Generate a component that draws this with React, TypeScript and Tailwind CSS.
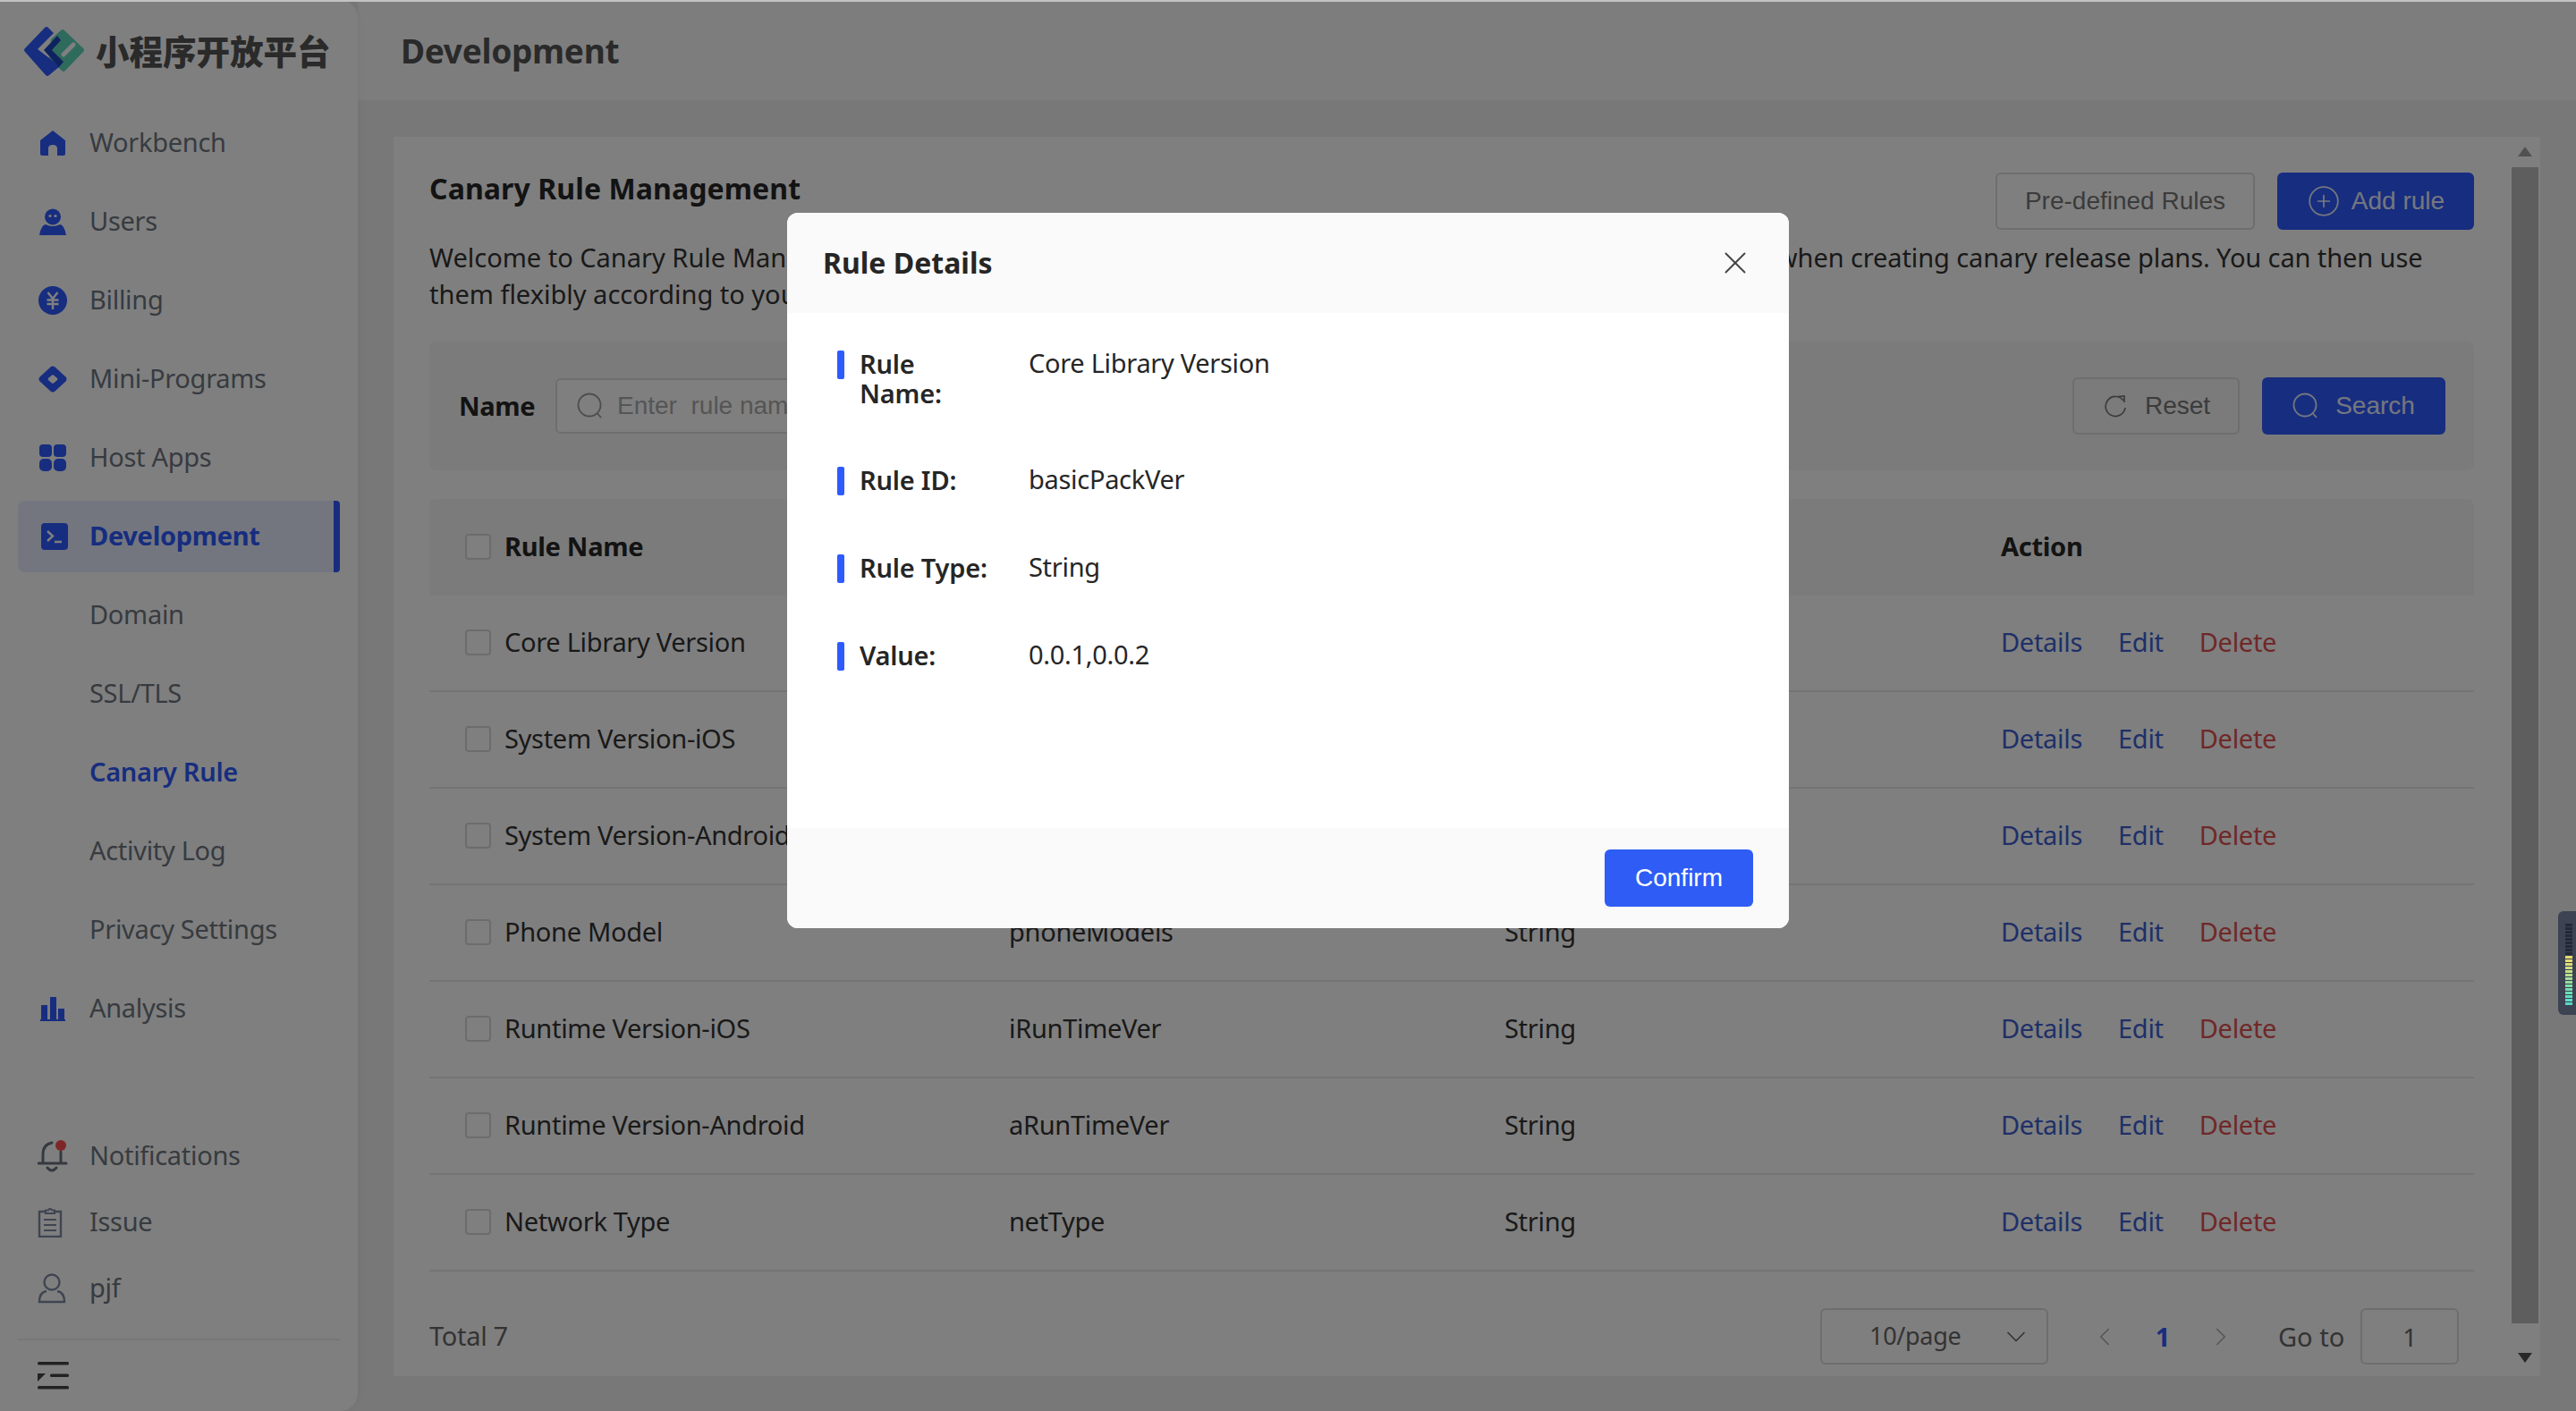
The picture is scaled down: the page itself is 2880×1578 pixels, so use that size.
import React from "react";
import { X, ChevronDown, ChevronLeft, ChevronRight, CirclePlus } from "lucide-react";

const B = "#2e5bff";

function Logo() {
  return (
    <svg width="68" height="56" viewBox="0 0 68 56" className="shrink-0">
      <path d="M41 4 Q43 2 45 4 L66 24 Q68 26 66 28 L46 49 Q44 51 42 49 L28 36 L30 14 Z" fill="#5fd6b8" />
      <path d="M44 31 L55 20" stroke="#fff" strokeWidth="5" strokeLinecap="round" />
      <path d="M23 1 Q25 -1 27 1 L33 7 L15 25 L40 44 L28 54 Q26 56 24 54 L1 28 Q-1 26 1 24 Z" fill="#2e5bff" />
      <path d="M37 10 L41 15 L31 26 L44 39 L39 45 L22 26 Z" fill="#1e44c0" />
    </svg>
  );
}

const ic = "shrink-0";
const Home = () => (
  <svg width="30" height="30" viewBox="0 0 30 30" className={ic}><path d="M15 1 L29 12 V27 Q29 29 27 29 H20 V21 Q20 17 15 17 Q10 17 10 21 V29 H3 Q1 29 1 27 V12 Z" fill={B} /></svg>
);
const Users = () => (
  <svg width="30" height="30" viewBox="0 0 30 30" className={ic}>
    <ellipse cx="15" cy="9.5" rx="9" ry="9" fill={B} />
    <circle cx="12" cy="8.5" r="1.6" fill="#fff" /><circle cx="18" cy="8.5" r="1.6" fill="#fff" />
    <path d="M7 18 Q15 22 23 18 Q28 19 30 30 H0 Q2 19 7 18 Z" fill={B} />
  </svg>
);
const Billing = () => (
  <svg width="32" height="32" viewBox="0 0 32 32" className={ic}>
    <circle cx="16" cy="16" r="16" fill={B} />
    <path d="M10.5 7 L16 14 L21.5 7 M9.5 15.5 H22.5 M9.5 20 H22.5 M16 14 V26" stroke="#fff" strokeWidth="2.4" fill="none" />
  </svg>
);
const Diamond = () => (
  <svg width="32" height="30" viewBox="0 0 32 30" className={ic}>
    <path d="M13.5 1.5 Q16 -0.5 18.5 1.5 L30.5 12.5 Q32.5 15 30.5 17.5 L18.5 28.5 Q16 30.5 13.5 28.5 L1.5 17.5 Q-0.5 15 1.5 12.5 Z" fill={B} />
    <path d="M15 10.5 Q16 10 17 10.5 L21 14 Q22 15 21 16 L17 19.5 Q16 20 15 19.5 L11 16 Q10 15 11 14 Z" fill="#fff" />
  </svg>
);
const Grid4 = () => (
  <svg width="30" height="30" viewBox="0 0 30 30" className={ic}>
    <rect x="0" y="0" width="14" height="14" rx="4" fill={B} /><rect x="16" y="0" width="14" height="14" rx="4" fill={B} />
    <rect x="0" y="16" width="14" height="14" rx="5" fill={B} /><rect x="16" y="16" width="14" height="14" rx="5" fill={B} />
  </svg>
);
const Term = () => (
  <svg width="30" height="30" viewBox="0 0 30 30" className={ic}>
    <rect width="30" height="30" rx="4" fill={B} />
    <path d="M7 9 L13 14.5 L7 20 M15 21 H23" stroke="#fff" strokeWidth="2.4" fill="none" />
  </svg>
);
const Bars = () => (
  <svg width="28" height="27" viewBox="0 0 28 27" className={ic}>
    <rect x="1" y="9" width="7" height="16" fill={B} /><rect x="11" y="0" width="7" height="25" fill={B} /><rect x="20" y="13" width="7" height="12" fill={B} /><rect x="0" y="25" width="28" height="2" fill={B} />
  </svg>
);
const Bell = () => (
  <svg width="34" height="38" viewBox="0 0 34 38" className={ic}>
    <path d="M6 26 V17 Q6 6 16 4 M26 14 V26 M1 27 H32 M11 32 Q16 38 21 32" stroke="#6b7280" strokeWidth="3" fill="none" strokeLinecap="round" />
    <circle cx="26" cy="7" r="6" fill="#ff4d4f" />
  </svg>
);
const Clip = () => (
  <svg width="28" height="34" viewBox="0 0 28 34" className={ic}>
    <path d="M9 5 H2 V33 H26 V5 H19" stroke="#7f8aa3" strokeWidth="2.4" fill="none" />
    <path d="M9 7 V3.5 H12 Q14 0 16 3.5 H19 V7 Z" stroke="#7f8aa3" strokeWidth="2.2" fill="none" />
    <path d="M7 14 H21 M7 20 H21 M7 26 H21" stroke="#7f8aa3" strokeWidth="2.2" />
  </svg>
);
const Person = () => (
  <svg width="32" height="34" viewBox="0 0 32 34" className={ic}>
    <circle cx="16" cy="10" r="8.5" stroke="#7f8aa3" strokeWidth="2.4" fill="none" />
    <path d="M10 20 Q2 21 2 32 H30 Q30 21 22 20" stroke="#7f8aa3" strokeWidth="2.4" fill="none" />
  </svg>
);
const Toggle = () => (
  <svg width="36" height="31" viewBox="0 0 36 31" className="shrink-0">
    <rect x="0" y="0" width="35" height="3.6" rx="1.5" fill="#444" />
    <rect x="14" y="13.5" width="21" height="3.6" rx="1.5" fill="#444" />
    <rect x="0" y="27" width="35" height="3.6" rx="1.5" fill="#444" />
    <path d="M0 13 H9 L0 22 Z" fill="#444" />
  </svg>
);
const Find = ({ cls }: { cls: string }) => (
  <svg width="30" height="30" viewBox="0 0 30 30" className={`shrink-0 ${cls}`}>
    <circle cx="14" cy="14" r="12.5" fill="none" stroke="currentColor" strokeWidth="1.8" />
    <path d="M23 23.5 L27 28" fill="none" stroke="currentColor" strokeWidth="1.8" />
  </svg>
);
const Refresh = () => (
  <svg width="24" height="25" viewBox="0 0 24 25" className="shrink-0">
    <path d="M21 6 A11 11 0 1 0 23 14" fill="none" stroke="currentColor" strokeWidth="1.7" />
    <path d="M15 1.5 L22 1 L22 8" fill="none" stroke="currentColor" strokeWidth="1.7" />
  </svg>
);

function Nav({ icon, label, cls = "text-[#6f7680]" }: { icon?: React.ReactNode; label: string; cls?: string }) {
  return (
    <div className="h-[88px] flex items-center pl-[44px]">
      <div className="w-[56px] flex justify-center shrink-0 pr-[26px]">{icon}</div>
      <span className={`text-[29px] tracking-[-0.3px] leading-none pb-[3px] ${cls}`}>{label}</span>
    </div>
  );
}

function Foot({ icon, label, h }: { icon: React.ReactNode; label: string; h: string }) {
  return (
    <div className={`flex items-center ${h} pl-[42px]`}>
      <div className="w-[58px] shrink-0">{icon}</div>
      <span className="text-[29px] tracking-[-0.3px] leading-none pb-[3px] text-[#6f7680]">{label}</span>
    </div>
  );
}

const rows = [
  ["Core Library Version", "basicPackVer", "String"],
  ["System Version-iOS", "iOSVer", "String"],
  ["System Version-Android", "androidVer", "String"],
  ["Phone Model", "phoneModels", "String"],
  ["Runtime Version-iOS", "iRunTimeVer", "String"],
  ["Runtime Version-Android", "aRunTimeVer", "String"],
  ["Network Type", "netType", "String"],
];

const cols = "grid grid-cols-[648px_554px_555px_1fr] items-center";

function Check() {
  return <span className="w-[29px] h-[29px] rounded-[4px] border-2 border-[#d9d9d9] bg-white shrink-0 mr-[15px]" />;
}

function Detail({ label, value, tall }: { label: React.ReactNode; value: string; tall?: boolean }) {
  return (
    <div className="flex items-start mb-[64px]">
      <span className="w-[8px] h-[32px] rounded-[2px] bg-[#2e5bff] shrink-0" />
      <span className={`w-[206px] shrink-0 pl-[17px] -mt-[2px] text-[29px] tracking-[-0.2px] leading-[33px] font-semibold text-[#262626] ${tall ? "h-[68px]" : "h-[36px]"}`}>{label}</span>
      <span className="text-[29px] tracking-[-0.3px] leading-[33px] text-[#262626] -mt-[3px]">{value}</span>
    </div>
  );
}

function Meter() {
  const dark = Array.from({ length: 9 });
  const lit = ["#e6d96a", "#e3da70", "#dcdc78", "#d0dd80", "#c4de88", "#b4de90", "#a4de98", "#94dea0", "#84dea8", "#74deb0", "#68deb8", "#60dec0", "#5cdcc8", "#58d8c8"];
  return (
    <div className="absolute z-30 right-0 top-[1019px] w-[20px] h-[116px] bg-[#3d4352] rounded-l-[6px] flex flex-col gap-[1px] pt-[14px] pl-[8px]">
      {dark.map((_, i) => <span key={i} className="w-[8px] h-[3px] bg-[#23283a]" />)}
      {lit.map((c, i) => <span key={i} className="w-[8px] h-[3px]" style={{ backgroundColor: c }} />)}
    </div>
  );
}

export default function App() {
  return (
    <div className="relative w-[2880px] h-[1578px] overflow-hidden flex bg-[#f0f0f0] font-['Noto_Sans','Noto_Sans_CJK_SC',sans-serif]">
      {/* Sidebar */}
      <aside className="w-[400px] h-full bg-white rounded-r-[20px] flex flex-col shrink-0 shadow-[2px_0_8px_rgba(0,0,0,0.04)] z-10">
        <div className="h-[116px] flex items-center pl-[27px]">
          <Logo />
          <span className="ml-[12px] pb-[4px] text-[37.5px] leading-none font-black text-[#555] font-['Noto_Sans_CJK_SC',sans-serif]">小程序开放平台</span>
        </div>
        <nav className="flex flex-col">
          <Nav icon={<Home />} label="Workbench" />
          <Nav icon={<Users />} label="Users" />
          <Nav icon={<Billing />} label="Billing" />
          <Nav icon={<Diamond />} label="Mini-Programs" />
          <Nav icon={<Grid4 />} label="Host Apps" />
          <div className="relative mx-[20px] h-[80px] my-[4px] rounded-[8px] bg-[#e6ecff] flex items-center pl-[24px]">
            <div className="w-[56px] shrink-0 pl-[2px]"><Term /></div>
            <span className="text-[29px] tracking-[-0.3px] leading-none pb-[3px] font-bold text-[#2e5bff]">Development</span>
            <span className="absolute right-0 top-0 bottom-0 w-[7px] bg-[#2e5bff] rounded-r-[4px]" />
          </div>
          <Nav label="Domain" />
          <Nav label="SSL/TLS" />
          <Nav label="Canary Rule" cls="text-[#2e5bff] font-semibold" />
          <Nav label="Activity Log" />
          <Nav label="Privacy Settings" />
          <Nav icon={<Bars />} label="Analysis" />
        </nav>
        <div className="flex-1" />
        <Foot icon={<Bell />} label="Notifications" h="h-[74px]" />
        <Foot icon={<Clip />} label="Issue" h="h-[74px]" />
        <Foot icon={<Person />} label="pjf" h="h-[74px]" />
        <div className="mx-[20px] mt-[19px] h-[2px] bg-[#eeeeee]" />
        <div className="h-[79px] pl-[42px] flex items-center"><Toggle /></div>
      </aside>

      {/* Main */}
      <main className="flex-1 flex flex-col min-w-0">
        <header className="h-[112px] shrink-0 bg-[#fbfbfb] pl-[48px] flex items-center">
          <h1 className="text-[37px] tracking-[-0.3px] leading-none font-bold text-[#555]">Development</h1>
        </header>
        <div className="pl-[40px] pt-[41px]">
          <div className="w-[2400px] h-[1386px] bg-white flex">
            <div className="w-[2366px] pl-[40px] pr-[40px] pt-[40px] shrink-0">
              <div className="flex items-start justify-between h-[64px]">
                <h2 className="text-[32px] tracking-[0.1px] leading-[36px] font-bold text-[#262626]">Canary Rule Management</h2>
                <div className="flex gap-[25px] font-['Liberation_Sans',sans-serif]">
                  <button className="w-[290px] h-[64px] rounded-[6px] border-2 border-[#dcdcdc] text-[28px] text-[#777]">Pre-defined Rules</button>
                  <button className="w-[220px] h-[64px] rounded-[6px] bg-[#2e5bff] text-[28px] text-white/90 flex items-center justify-center gap-[12px]">
                    <CirclePlus size={38} strokeWidth={1.1} />Add rule
                  </button>
                </div>
              </div>
              <p className="mt-[10px] text-[29px] leading-[41px] text-[#333] whitespace-nowrap">
                Welcome to Canary Rule Management. Here you can configure and save custom rules in advance for later use <span className="ml-[7px] tracking-[-0.1px]">when creating canary release plans. You can then use</span><br />
                them flexibly according to your needs.
              </p>
              <div className="mt-[33px] h-[144px] bg-[#f7f7f7] rounded-[8px] flex items-center pl-[33px] pr-[32px]">
                <span className="text-[29px] tracking-[-0.3px] font-bold text-[#262626] w-[108px] shrink-0">Name</span>
                <div className="w-[520px] h-[62px] rounded-[6px] border-2 border-[#dcdcdc] bg-white flex items-center pl-[22px] text-[#aaa] font-['Liberation_Sans',sans-serif] text-[28px] whitespace-pre">
                  <Find cls="mr-[15px] text-[#999]" />Enter  rule name
                </div>
                <div className="flex-1" />
                <div className="flex gap-[25px] font-['Liberation_Sans',sans-serif]">
                  <button className="w-[187px] h-[64px] rounded-[6px] border-2 border-[#dcdcdc] text-[28px] text-[#777] flex items-center justify-center gap-[21px] pl-[3px]">
                    <Refresh />Reset
                  </button>
                  <button className="w-[205px] h-[64px] rounded-[6px] bg-[#2e5bff] text-[28px] text-white/90 flex items-center justify-center gap-[18px]">
                    <Find cls="" />Search
                  </button>
                </div>
              </div>
              <div className={`${cols} mt-[32px] h-[108px] pb-[2px] bg-[#f7f7f7] rounded-t-[8px] text-[29px] tracking-[-0.3px] font-bold text-[#262626]`}>
                <div className="flex items-center pl-[40px]"><Check />Rule Name</div>
                <div>Rule ID</div>
                <div>Rule Type</div>
                <div>Action</div>
              </div>
              {rows.map((r) => (
                <div key={r[0]} className={`${cols} h-[108px] pb-[2px] border-b-2 border-[#e8e8e8] text-[29px] tracking-[-0.3px] text-[#333]`}>
                  <div className="flex items-center pl-[40px]"><Check />{r[0]}</div>
                  <div>{r[1]}</div>
                  <div>{r[2]}</div>
                  <div className="flex gap-[40px]">
                    <span className="text-[#3f5fd0]">Details</span>
                    <span className="text-[#3f5fd0]">Edit</span>
                    <span className="text-[#e05050]">Delete</span>
                  </div>
                </div>
              ))}
              <div className="mt-[41px] h-[63px] flex items-center text-[29px] tracking-[-0.3px] text-[#666]">
                <span className="pb-[2px]">Total 7</span>
                <div className="flex-1" />
                <div className="w-[255px] h-[63px] border-2 border-[#dcdcdc] rounded-[6px] flex items-center pl-[53px] pr-[16px] justify-between text-[27px]">
                  <span>10/page</span>
                  <ChevronDown size={36} strokeWidth={1.1} />
                </div>
                <div className="ml-[43px] w-[40px] flex justify-center text-[#aaa]"><ChevronLeft size={34} strokeWidth={1.1} /></div>
                <span className="ml-[20px] w-[50px] text-center font-bold text-[#2e5bff]">1</span>
                <div className="ml-[20px] w-[40px] flex justify-center text-[#aaa]"><ChevronRight size={34} strokeWidth={1.1} /></div>
                <span className="ml-[44px] w-[75px] whitespace-nowrap tracking-normal">Go to</span>
                <div className="ml-[17px] mr-[17px] w-[110px] h-[63px] border-2 border-[#dcdcdc] rounded-[6px] flex items-center justify-center text-[28px]">1</div>
              </div>
            </div>
            {/* scrollbar */}
            <div className="w-[34px] relative h-full flex flex-col items-center">
              <span className="mt-[11px] w-0 h-0 border-x-[8px] border-x-transparent border-b-[11px] border-b-[#a3a3a3]" />
              <span className="mt-[12px] w-[30px] h-[1293px] bg-[#bdbdbd]" />
              <span className="mt-[33px] w-0 h-0 border-x-[8px] border-x-transparent border-t-[11px] border-t-[#505050]" />
            </div>
          </div>
        </div>
      </main>

      {/* Overlay + dialog */}
      <div className="absolute left-0 right-0 top-0 h-[2px] bg-[#c2c2c2] z-30" />
      <div className="absolute inset-0 z-20 bg-black/50 flex justify-center items-start pt-[238px]">
        <div className="w-[1120px] h-[800px] bg-white rounded-[12px] overflow-hidden flex flex-col">
          <div className="h-[112px] bg-[#fafafa] flex items-center justify-between pl-[40px] pr-[39px] shrink-0">
            <span className="text-[32px] font-bold text-[#262626]">Rule Details</span>
            <X size={42} strokeWidth={1.1} className="text-[#444]" />
          </div>
          <div className="flex-1 pl-[56px] pt-[42px]">
            <Detail tall label={<>Rule<br />Name:</>} value="Core Library Version" />
            <Detail label="Rule ID:" value="basicPackVer" />
            <Detail label="Rule Type:" value="String" />
            <Detail label="Value:" value="0.0.1,0.0.2" />
          </div>
          <div className="h-[112px] bg-[#fafafa] flex items-center justify-end pr-[40px] shrink-0">
            <button className="w-[166px] h-[64px] rounded-[6px] bg-[#2e5cf5] text-white text-[28px] font-['Liberation_Sans',sans-serif]">Confirm</button>
          </div>
        </div>
      </div>
      <Meter />
    </div>
  );
}
